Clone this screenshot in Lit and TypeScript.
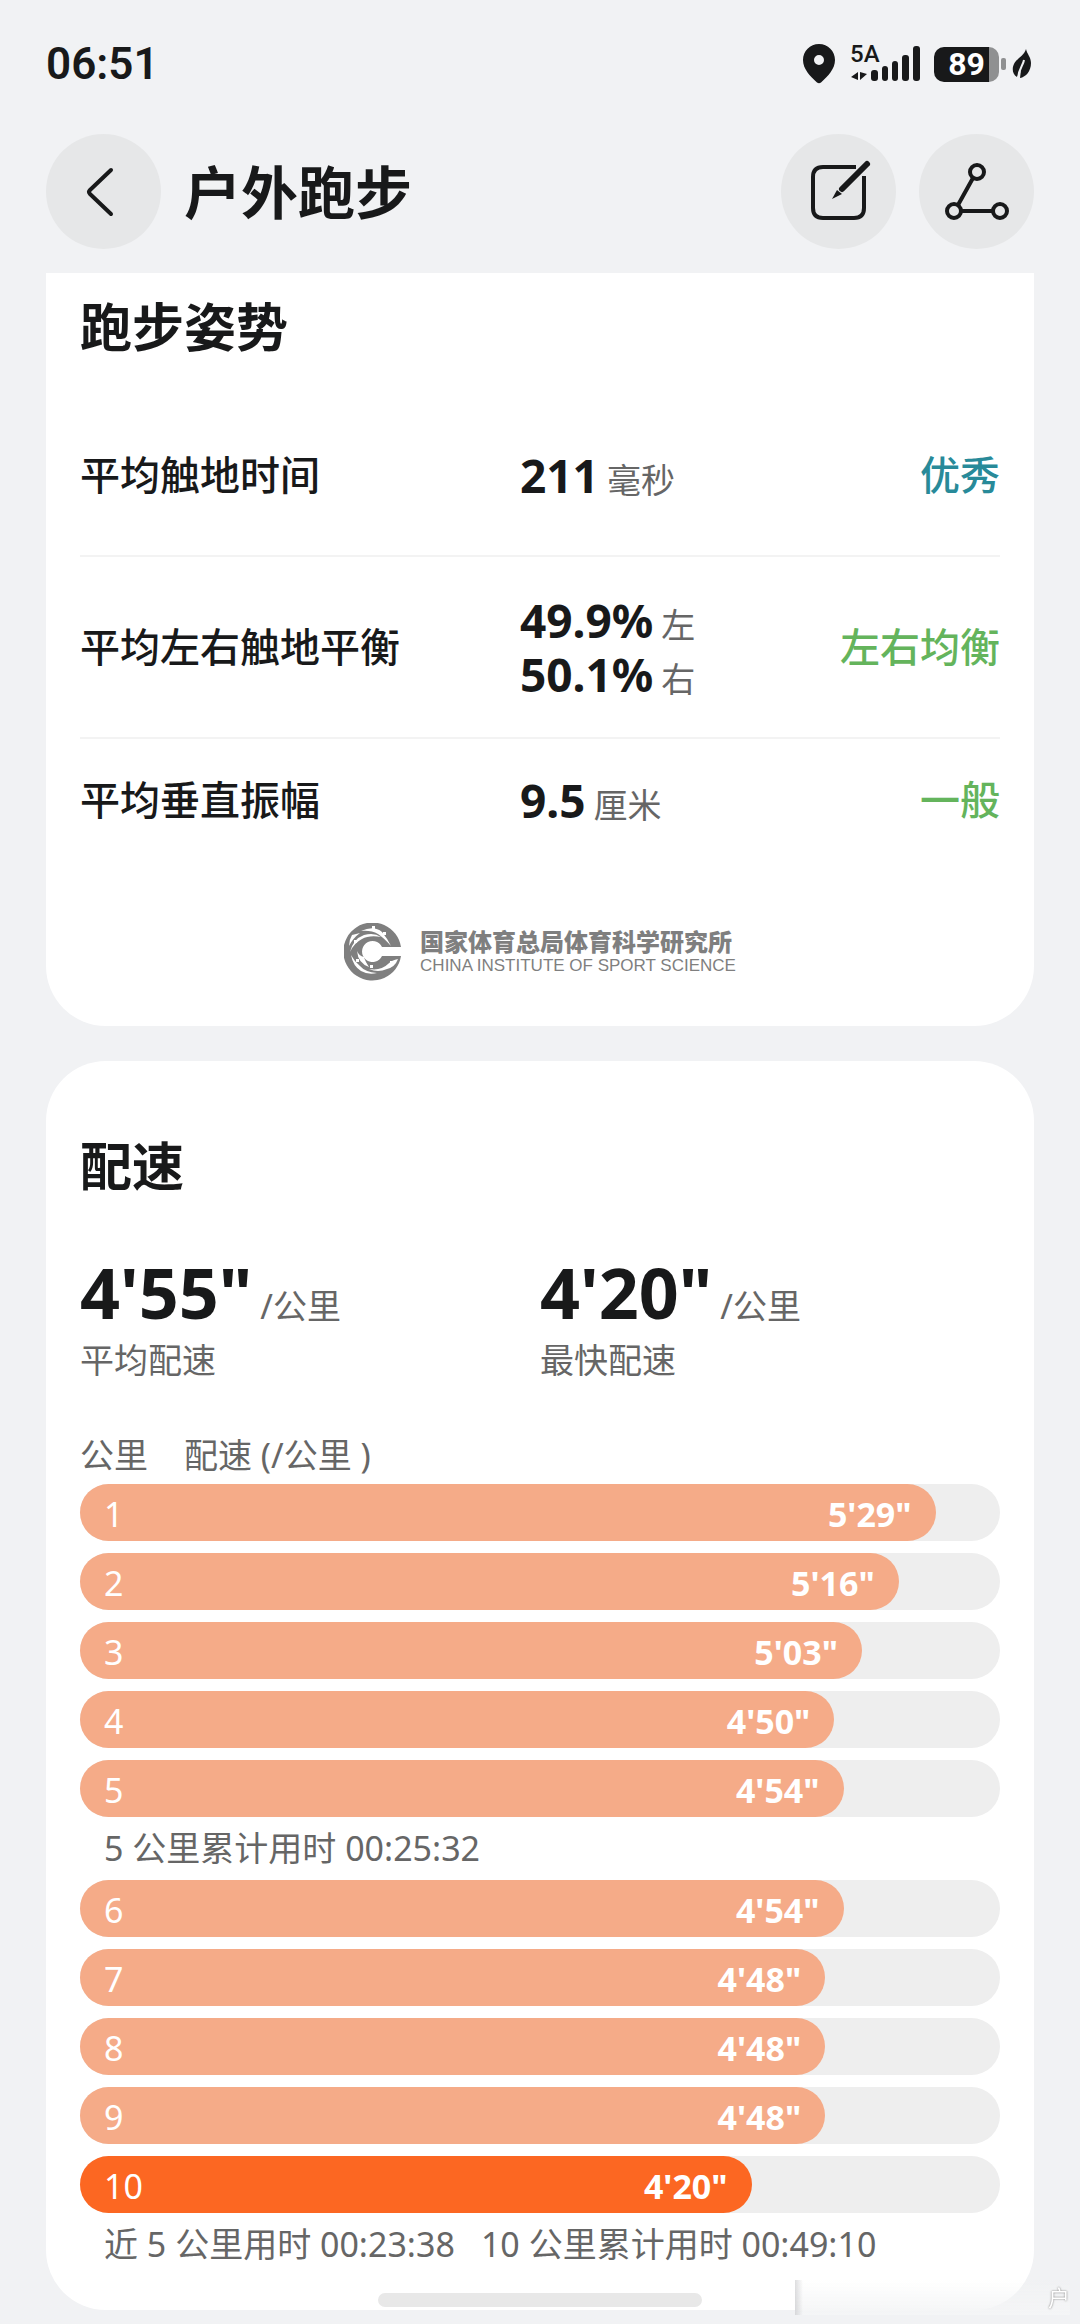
import { LitElement, html, css, svg } from 'lit';
import { customElement, property } from 'lit/decorators.js';
import { classMap } from 'lit/directives/class-map.js';
import { styleMap } from 'lit/directives/style-map.js';

interface PostureRow {
  label: string;
  values: { value: string; unit: string }[];
  verdict: string;
  level: 'great' | 'good';
}

interface Split {
  km: number;
  pace: string;
  percent: number;
  note?: string[];
}

const POSTURE: PostureRow[] = [
  { label: '平均触地时间', values: [{ value: '211', unit: '毫秒' }], verdict: '优秀', level: 'great' },
  {
    label: '平均左右触地平衡',
    values: [
      { value: '49.9%', unit: '左' },
      { value: '50.1%', unit: '右' },
    ],
    verdict: '左右均衡',
    level: 'good',
  },
  { label: '平均垂直振幅', values: [{ value: '9.5', unit: '厘米' }], verdict: '一般', level: 'good' },
];

const SPLITS: Split[] = [
  { km: 1, pace: `5'29"`, percent: 93 },
  { km: 2, pace: `5'16"`, percent: 89 },
  { km: 3, pace: `5'03"`, percent: 85 },
  { km: 4, pace: `4'50"`, percent: 82 },
  { km: 5, pace: `4'54"`, percent: 83, note: ['5 公里累计用时 00:25:32'] },
  { km: 6, pace: `4'54"`, percent: 83 },
  { km: 7, pace: `4'48"`, percent: 81 },
  { km: 8, pace: `4'48"`, percent: 81 },
  { km: 9, pace: `4'48"`, percent: 81 },
  { km: 10, pace: `4'20"`, percent: 73, note: ['近 5 公里用时 00:23:38', '10 公里累计用时 00:49:10'] },
];

/**
 * System status bar: clock, location, signal and battery.
 *
 * @element run-status-bar
 */
@customElement('run-status-bar')
export class RunStatusBar extends LitElement {
  static styles = css`
    :host {
      display: flex;
      align-items: center;
      justify-content: space-between;
      height: 60px;
      color: #18191a;
      font-family: Roboto, 'Noto Sans', sans-serif;
    }

    .time {
      font-size: 44px;
      font-weight: 600;
      line-height: 60px;
    }

    .icons {
      display: flex;
      align-items: center;
      gap: 14px;
    }

    svg {
      display: block;
    }

    .signal text {
      font-size: 24px;
      font-weight: 500;
    }

    .power {
      display: flex;
      align-items: center;
      gap: 2px;
    }

    .battery {
      width: 65px;
      height: 35px;
      border-radius: 10px;
      background: linear-gradient(to right, #18191a 85%, #8f9091 85%);
      color: #fff;
      font-size: 32px;
      font-weight: 700;
      line-height: 35px;
      text-align: center;
    }

    .nub {
      width: 5px;
      height: 12px;
      border-radius: 2px;
      background: #8f9091;
    }

    .leaf {
      margin-left: 4px;
    }
  `;

  render() {
    return html`
      <span class="time">06:51</span>
      <div class="icons">
        <svg width="34" height="40" viewBox="0 0 34 40" fill="currentColor" fill-rule="evenodd">
          <path d="M17 0C8 0 1 7 1 16c0 9 7 16 14 22.500q2 1.500 4 0C26 32 33 25 33 16 33 7 26 0 17 0zM17 11a5 5 0 1 1 0 10a5 5 0 1 1 0-10z"/>
        </svg>
        <svg class="signal" width="70" height="52" viewBox="0 -8 70 52" fill="currentColor">
          <text x="0" y="16">5A</text>
          <path d="M8 26v8L1 31zM10 26v8l7-6z"/>
          <rect x="21" y="24" width="7" height="11" rx="3"/>
          <rect x="32" y="20" width="6" height="15" rx="3"/>
          <rect x="42" y="15" width="6" height="20" rx="3"/>
          <rect x="52" y="9" width="7" height="26" rx="3"/>
          <rect x="63" y="0" width="7" height="35" rx="3"/>
        </svg>
        <div class="power">
          <div class="battery">89</div>
          <span class="nub"></span>
          <svg class="leaf" width="22" height="30" viewBox="0 0 22 30">
            <path d="M14 0C15 5 19 8 19 14c0 8-5 14-11 15l1-8L5 28C0 25 0 19 2 15 5 9 12 7 14 0z" fill="currentColor"/>
            <path d="M12 11C11 17 7 19 6 29" fill="none" stroke="#f1f2f4" stroke-width="2"/>
          </svg>
        </div>
      </div>
    `;
  }
}

/**
 * One kilometre split drawn as a pill-shaped bar.
 *
 * @element run-split-bar
 */
@customElement('run-split-bar')
export class RunSplitBar extends LitElement {
  static styles = css`
    :host {
      display: block;
      height: 57px;
      border-radius: 29px;
      background: #eeeeee;
    }

    .fill {
      display: flex;
      align-items: center;
      justify-content: space-between;
      box-sizing: border-box;
      height: 100%;
      padding: 2px 24px 0;
      border-radius: inherit;
      background: #f5ab88;
      color: #fff;
      font-size: 34px;
    }

    .fill.fastest {
      background: #fc6722;
    }

    .pace {
      font-weight: 700;
    }
  `;

  @property({ type: Number }) km = 0;
  @property() pace = '';
  @property({ type: Number }) percent = 0;
  @property({ type: Boolean }) fastest = false;

  render() {
    return html`
      <div class=${classMap({ fill: true, fastest: this.fastest })} style=${styleMap({ width: `${this.percent}%` })}>
        <span>${this.km}</span>
        <span class="pace">${this.pace}</span>
      </div>
    `;
  }
}

@customElement('app-root')
export class AppRoot extends LitElement {
  static styles = css`
    :host {
      display: block;
      box-sizing: border-box;
      min-height: 100vh;
      padding: 34px 46px 13px;
      background: #f1f2f4;
      color: #18191a;
      font-family: 'Noto Sans', 'Noto Sans CJK SC', sans-serif;
    }

    h1,
    h2,
    p,
    ol,
    dl,
    dd {
      margin: 0;
      padding: 0;
    }

    svg {
      display: block;
    }

    header {
      display: flex;
      align-items: center;
      gap: 23px;
      margin: 40px 0 24px;
    }

    h1 {
      flex: 1;
      font-size: 57px;
      font-weight: 700;
      line-height: 80px;
    }

    button {
      width: 115px;
      height: 115px;
      padding: 0;
      border: 0;
      border-radius: 50%;
      background: #e6e7e8;
      color: inherit;
    }

    .card {
      padding: 75px 34px 34px;
      border-radius: 60px;
      background: #fff;
    }

    /* scrolled under the header, so its upper edge is cut straight */
    .card.scrolled {
      margin-bottom: 35px;
      padding: 24px 34px 45px;
      border-radius: 0 0 60px 60px;
    }

    h2 {
      font-size: 52px;
      font-weight: 700;
      line-height: 60px;
    }

    table {
      width: 100%;
      margin: 38px 0 62px;
      border-collapse: collapse;
      table-layout: fixed;
      font-size: 40px;
      line-height: 54px;
    }

    tr + tr {
      border-top: 2px solid #f3f3f3;
    }

    th,
    td {
      padding: 36px 0;
      font-weight: 500;
      text-align: left;
      white-space: nowrap;
    }

    tr:first-child > * {
      padding: 53px 0;
    }

    tr:last-child > * {
      padding: 34px 0;
    }

    .name {
      width: 440px;
    }

    .value {
      display: flex;
      align-items: baseline;
      gap: 8px;
    }

    .value b {
      font-size: 46px;
      font-weight: 700;
    }

    .unit {
      color: #666;
      font-size: 34px;
      font-weight: 400;
      line-height: 34px;
    }

    .verdict {
      text-align: right;
    }

    .great {
      color: #288a99;
    }

    .good {
      color: #64b45c;
    }

    .institute {
      display: flex;
      align-items: center;
      justify-content: center;
      gap: 18px;
      color: #7f7f7f;
    }

    .institute strong {
      display: block;
      font-size: 24px;
      font-weight: 900;
      line-height: 28px;
    }

    .institute small {
      display: block;
      font-family: 'Liberation Sans', Arial, sans-serif;
      font-size: 17px;
      line-height: 20px;
    }

    .stats {
      display: grid;
      grid-template-columns: 1fr 1fr;
      margin: 54px 0 40px;
    }

    .stats > div {
      display: flex;
      flex-direction: column-reverse;
    }

    .stats dt {
      color: #666;
      font-size: 34px;
      line-height: 53px;
    }

    .stats dd {
      display: flex;
      align-items: baseline;
      gap: 8px;
      line-height: 84px;
    }

    .stats b {
      font-size: 70px;
      font-weight: 700;
    }

    .legend {
      display: flex;
      gap: 36px;
      color: #666;
      font-size: 34px;
      line-height: 57px;
    }

    ol {
      list-style: none;
    }

    li + li {
      margin-top: 12px;
    }

    li.noted + li {
      margin-top: 0;
    }

    .note {
      display: flex;
      gap: 26px;
      padding: 0 24px;
      color: #666;
      font-size: 34px;
      line-height: 63px;
      white-space: nowrap;
    }

    .home-indicator {
      position: fixed;
      bottom: 17px;
      left: 35%;
      right: 35%;
      height: 14px;
      border-radius: 7px;
      background: #e8e8e8;
    }

    .stamp {
      position: fixed;
      right: 10px;
      bottom: 9px;
      width: 275px;
      height: 35px;
      background: linear-gradient(to right, rgba(160, 160, 165, 0.35), rgba(244, 245, 246, 0) 8px),
        linear-gradient(rgba(244, 245, 246, 0), #f4f5f6);
      color: #fff;
      font-size: 22px;
      line-height: 35px;
      text-align: right;
      text-shadow: 0 0 2px #666;
    }
  `;

  private renderEmblem() {
    return html`
      <svg width="58" height="58" viewBox="0 0 58 58" fill="none">
        <path d="M57 24A29 29 0 1 0 57 33H38A10.500 10.500 0 1 1 38 24z" fill="currentColor"/>
        ${svg`
          <g fill="#fff">
            <path d="M17 8Q30 2 38 9Q43 15 47 23Q40 15 34 11Q27 7 17 8z"/>
            <path d="M6 29Q9 16 20 12Q30 9 37 14Q25 12 18 16Q10 20 6 29z"/>
            <path d="M8 12L16 10Q9 15 5 23Q5 17 8 12z"/>
            <path d="M7 32Q9 43 17 48Q24 52 33 50Q21 49 16 43Q10 38 7 32z"/>
            <path d="M13 28Q14 40 25 44Q21 38 20 34Q15 33 13 28z"/>
            <path d="M25 46Q37 48 44 41Q48 37 54 36Q51 44 43 46Q34 50 25 46z"/>
            <path d="M28 3h3v3h-3zM39 9h3v3h-3zM10 17h3v3h-3zM12 36h3v3h-3zM26 42h3v3h-3zM46 38h3v3h-3z"/>
          </g>
        `}
      </svg>
    `;
  }

  private renderPosture(row: PostureRow) {
    return html`
      <tr>
        <th class="name" scope="row">${row.label}</th>
        <td>
          ${row.values.map(
            (v) => html`<div class="value"><b>${v.value}</b><span class="unit">${v.unit}</span></div>`
          )}
        </td>
        <td class="verdict ${row.level}">${row.verdict}</td>
      </tr>
    `;
  }

  private renderStat(label: string, pace: string) {
    return html`
      <div>
        <dt>${label}</dt>
        <dd><b>${pace}</b><span class="unit">/公里</span></dd>
      </div>
    `;
  }

  private renderSplit(split: Split) {
    return html`
      <li class=${classMap({ noted: !!split.note })}>
        <run-split-bar
          .km=${split.km}
          .pace=${split.pace}
          .percent=${split.percent}
          ?fastest=${split.km === 10}
        ></run-split-bar>
        ${split.note ? html`<p class="note">${split.note.map((n) => html`<span>${n}</span>`)}</p>` : ''}
      </li>
    `;
  }

  render() {
    return html`
      <run-status-bar></run-status-bar>
      <header>
        <button aria-label="返回">
          <svg viewBox="0 0 115 115" fill="none" stroke="currentColor" stroke-width="4" stroke-linecap="round" stroke-linejoin="round">
            <path d="M65 36L44 56q-2 2 0 4L65 80"/>
          </svg>
        </button>
        <h1>户外跑步</h1>
        <button aria-label="编辑">
          <svg viewBox="0 0 115 115" fill="none" stroke="currentColor" stroke-width="4">
            <path d="M75 33H42Q32 33 32 43V74Q32 84 42 84H73Q83 84 83 74V42"/>
            <path d="M86 30L61 55" stroke-width="6" stroke-linecap="round"/>
            <path d="M56 56L61 60L51 65z" fill="currentColor" stroke="none"/>
          </svg>
        </button>
        <button aria-label="分享">
          <svg viewBox="0 0 115 115" fill="none" stroke="currentColor" stroke-width="4">
            <circle cx="58" cy="38" r="7"/>
            <circle cx="35" cy="77" r="7"/>
            <circle cx="81" cy="77" r="7"/>
            <path d="M54 44L39 71M42 77H74"/>
          </svg>
        </button>
      </header>

      <section class="card scrolled">
        <h2>跑步姿势</h2>
        <table>
          <colgroup>
            <col class="name" />
            <col />
            <col />
          </colgroup>
          <tbody>
            ${POSTURE.map((row) => this.renderPosture(row))}
          </tbody>
        </table>
        <div class="institute">
          ${this.renderEmblem()}
          <div>
            <strong>国家体育总局体育科学研究所</strong>
            <small>CHINA INSTITUTE OF SPORT SCIENCE</small>
          </div>
        </div>
      </section>

      <section class="card">
        <h2>配速</h2>
        <dl class="stats">
          ${this.renderStat('平均配速', `4'55"`)}
          ${this.renderStat('最快配速', `4'20"`)}
        </dl>
        <div class="legend"><span>公里</span><span>配速 (/公里 )</span></div>
        <ol>
          ${SPLITS.map((split) => this.renderSplit(split))}
        </ol>
      </section>

      <div class="home-indicator"></div>
      <div class="stamp">户</div>
    `;
  }
}

declare global {
  interface HTMLElementTagNameMap {
    'app-root': AppRoot;
    'run-status-bar': RunStatusBar;
    'run-split-bar': RunSplitBar;
  }
}
